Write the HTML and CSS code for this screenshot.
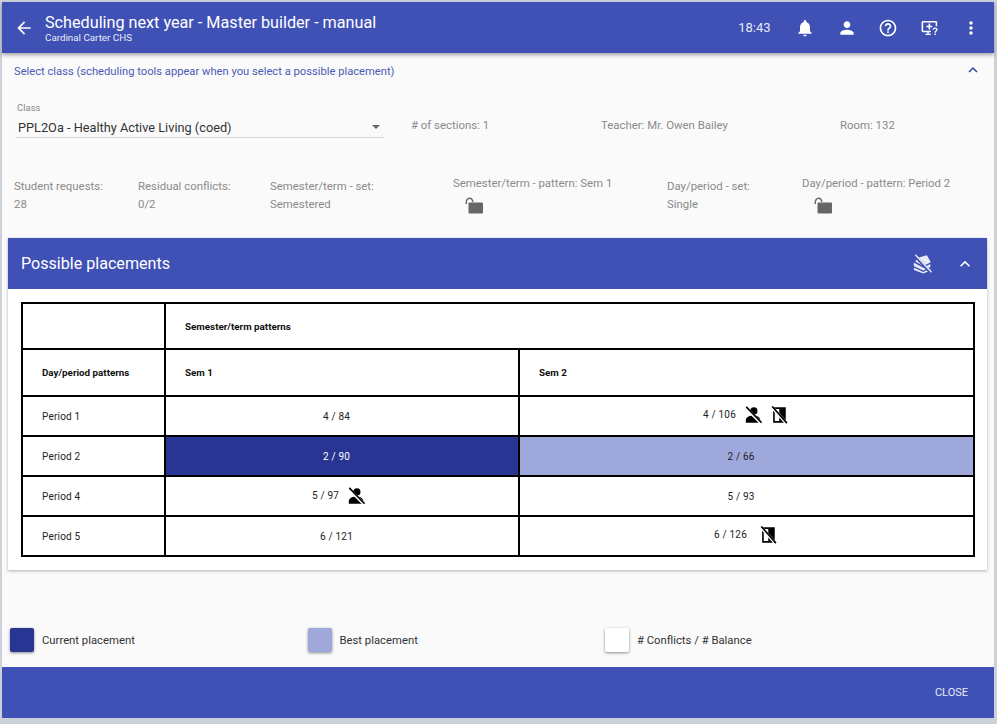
FILE: index.html
```html
<!DOCTYPE html>
<html lang="en">
<head>
<meta charset="utf-8">
<title>Master builder</title>
<link rel="stylesheet" href="styles.css">
</head>
<body>
<div class="dialog">
  <header class="appbar">
    <svg class="back" viewBox="0 0 24 24"><path d="M20 11H7.830l5.590-5.590L12 4l-8 8 8 8 1.410-1.410L7.830 13H20v-2z"/></svg>
    <div class="titles">
      <div class="title">Scheduling next year - Master builder - manual</div>
      <div class="subtitle">Cardinal Carter CHS</div>
    </div>
    <div class="time">18:43</div>
    <svg class="act" viewBox="0 0 24 24"><path d="M12 22c1.100 0 2-.9 2-2h-4c0 1.100.89 2 2 2zm6-6v-5c0-3.070-1.640-5.640-4.500-6.320V4c0-.83-.67-1.500-1.500-1.500s-1.500.67-1.500 1.500v.68C7.630 5.360 6 7.920 6 11v5l-2 2v1h16v-1l-2-2z"/></svg>
    <svg class="act" viewBox="0 0 24 24"><path d="M12 12c2.210 0 4-1.790 4-4s-1.790-4-4-4-4 1.790-4 4 1.790 4 4 4zm0 2c-2.670 0-8 1.340-8 4v2h16v-2c0-2.660-5.330-4-8-4z"/></svg>
    <svg class="act" viewBox="0 0 24 24"><path d="M11 18h2v-2h-2v2zm1-16C6.480 2 2 6.480 2 12s4.480 10 10 10 10-4.480 10-10S17.520 2 12 2zm0 18c-4.410 0-8-3.590-8-8s3.590-8 8-8 8 3.590 8 8-3.590 8-8 8zm0-14c-2.210 0-4 1.790-4 4h2c0-1.100.9-2 2-2s2 .9 2 2c0 2-3 1.750-3 5h2c0-2.250 3-2.500 3-5 0-2.210-1.790-4-4-4z"/></svg>
    <svg class="act" viewBox="0 0 24 24"><path d="M3.500 3.500h15.500c.9 0 1.600.7 1.600 1.600V10h-1.800V5.300H3.800v10h9.200V17H10.500v1.800h2.500v1.700H6.500v-1.700h2.300V17H3.500c-.9 0-1.600-.7-1.600-1.600V5.100c0-.9.7-1.600 1.600-1.600z"/><path d="M10.300 6.500h1.800v2.700h2.700V11h-2.700v2.700h-1.800V11H7.600V9.200h2.700z"/><path d="M18.200 11.500c-1.700 0-2.900 1.100-2.900 2.700h1.700c0-.7.5-1.200 1.200-1.200s1.200.5 1.200 1.100c0 1.200-2.100 1.300-2.100 3.500h1.700c0-1.500 2.100-1.800 2.100-3.600 0-1.500-1.200-2.500-2.900-2.500zM17.300 18.600h1.700v1.800h-1.700z"/></svg>
    <svg class="act" viewBox="0 0 24 24"><path d="M12 8c1.100 0 2-.9 2-2s-.9-2-2-2-2 .9-2 2 .9 2 2 2zm0 2c-1.100 0-2 .9-2 2s.9 2 2 2 2-.9 2-2-.9-2-2-2zm0 6c-1.100 0-2 .9-2 2s.9 2 2 2 2-.9 2-2-.9-2-2-2z"/></svg>
  </header>

  <main class="content">
    <div class="section-head">
      <span class="section-title">Select class (scheduling tools appear when you select a possible placement)</span>
      <svg class="chev-blue" viewBox="0 0 24 24"><path d="M7.410 15.410 12 10.830l4.590 4.580L18 14l-6-6-6 6z"/></svg>
    </div>

    <div class="class-row">
      <div class="select">
        <div class="select-label">Class</div>
        <div class="select-value">PPL2Oa - Healthy Active Living (coed)<span class="caret"></span></div>
      </div>
      <div class="info">
        <span># of sections: 1</span>
        <span>Teacher: Mr. Owen Bailey</span>
        <span>Room: 132</span>
      </div>
    </div>

    <div class="stats">
      <div class="stat"><div>Student requests:</div><div class="val">28</div></div>
      <div class="stat"><div>Residual conflicts:</div><div class="val">0/2</div></div>
      <div class="stat"><div>Semester/term - set:</div><div class="val">Semestered</div></div>
      <div class="stat lockstat"><div>Semester/term - pattern: Sem 1</div>
        <svg class="lock" viewBox="0 0 20 20"><path d="M1.500 7C1.500 3.600 3.200 1.500 5.500 1.500S9.500 3.400 9.500 6H8C8 4.200 7 3 5.500 3S3 4.500 3 7v1H1.500z"/><rect x="4.500" y="6.500" width="14.500" height="11" rx="1"/></svg>
      </div>
      <div class="stat"><div>Day/period - set:</div><div class="val">Single</div></div>
      <div class="stat lockstat"><div>Day/period - pattern: Period 2</div>
        <svg class="lock" viewBox="0 0 20 20"><path d="M1.500 7C1.500 3.600 3.200 1.500 5.500 1.500S9.500 3.400 9.500 6H8C8 4.200 7 3 5.500 3S3 4.500 3 7v1H1.500z"/><rect x="4.500" y="6.500" width="14.500" height="11" rx="1"/></svg>
      </div>
    </div>

    <section class="card">
      <div class="card-head">
        <span class="card-title">Possible placements</span>
        <svg class="card-icon" viewBox="0 0 24 24"><path d="M7 4.500 18 1.500 22.500 10 13.500 14.500 4 9z"/><path d="M2.500 10.500 13.500 16.500 22 12v3.500l-8.500 4.200L3 15c-1-.5-1.400-3.400-.5-4.500z"/><path d="M2.500 16.500 13.500 21.500 22 17.500v2.500l-8.500 3.500L3 19.500c-.9-.5-.9-2.300-.5-3z"/><path d="M3 1.500 23 23" stroke="#3f51b5" stroke-width="3.600"/><path d="M4 1 23.500 22" stroke="#e8eaf6" stroke-width="1.700"/></svg>
        <svg class="card-chev" viewBox="0 0 24 24"><path d="M7.410 15.410 12 10.830l4.590 4.580L18 14l-6-6-6 6z"/></svg>
      </div>
      <div class="card-body">
        <table class="grid">
          <colgroup><col class="c1"><col class="c2"><col class="c3"></colgroup>
          <tr class="tall"><th></th><th colspan="2">Semester/term patterns</th></tr>
          <tr class="tall"><th>Day/period patterns</th><th>Sem 1</th><th>Sem 2</th></tr>
          <tr><td class="lab">Period 1</td><td>4 / 84</td><td class="iconcell"><span class="cell"><span>4 / 106</span>
            <svg class="flag flag1" viewBox="0 0 20 20"><use href="#person-off"/></svg>
            <svg class="flag flag2" viewBox="0 0 20 20"><use href="#phone-off"/></svg></span></td></tr>
          <tr><td class="lab">Period 2</td><td class="current">2 / 90</td><td class="best">2 / 66</td></tr>
          <tr><td class="lab">Period 4</td><td class="iconcell narrow"><span class="cell"><span>5 / 97</span>
            <svg class="flag flag1" viewBox="0 0 20 20"><use href="#person-off"/></svg></span></td><td>5 / 93</td></tr>
          <tr><td class="lab">Period 5</td><td>6 / 121</td><td class="iconcell"><span class="cell"><span>6 / 126</span>
            <svg class="flag flag3" viewBox="0 0 20 20"><use href="#phone-off"/></svg></span></td></tr>
        </table>
      </div>
    </section>

    <div class="legend">
      <div class="leg"><span class="swatch s-current"></span>Current placement</div>
      <div class="leg"><span class="swatch s-best"></span>Best placement</div>
      <div class="leg"><span class="swatch s-plain"></span># Conflicts / # Balance</div>
    </div>
  </main>

  <footer class="foot"><span class="close">CLOSE</span></footer>
</div>

<svg class="defs" width="0" height="0">
  <symbol id="person-off" viewBox="0 0 20 20">
    <circle cx="11" cy="5.500" r="4"/>
    <path d="M2 18.500v-3C2 12 7 10.500 10.500 10.500s7.500 1.500 7.500 5v3z"/>
    <path d="M1.500 1.500 18.500 18.500" stroke="#fff" stroke-width="3.600"/>
    <path d="M2.500 1 19.500 18.500" stroke="#000" stroke-width="1.800"/>
  </symbol>
  <symbol id="phone-off" viewBox="0 0 20 20">
    <path d="M3.500 1.500h14v17h-14zM5.300 3.300v13.400h5V3.300z" fill-rule="evenodd"/>
    <path d="M1.500 .5 18 19" stroke="#fff" stroke-width="3.400"/>
    <path d="M2.500 .5 18.800 19" stroke="#000" stroke-width="1.800"/>
  </symbol>
</svg>
</body>
</html>
```
FILE: styles.css
```css
* { box-sizing: border-box; }
html, body { margin: 0; padding: 0; height: 100%; }
body {
  background: #cdd1da;
  font-family: Roboto, "Liberation Sans", sans-serif;
  overflow: hidden;
}
.dialog {
  width: 992px;
  height: 716px;
  margin: 2px 3px 6px 2px;
  background: #fafafa;
  display: flex;
  flex-direction: column;
}
.appbar {
  flex: none;
  height: 51px;
  background: #3f51b5;
  color: #fff;
  display: flex;
  align-items: center;
  box-shadow: 0 2px 4px rgba(0,0,0,.35);
  position: relative;
  z-index: 1;
  fill: #fff;
}
.back { width: 20px; height: 20px; margin-left: 12px; }
.titles { margin-left: 11px; flex: 1; }
.title { font-size: 16.200px; line-height: 19px; }
.subtitle { font-size: 9.800px; line-height: 11px; color: #e8eaf6; }
.time { font-size: 13px; margin-right: 3px; color: #e8eaf6; }
.act { width: 20px; height: 20px; margin-left: 21.500px; }
.act:last-child { margin-right: 13px; }

.content { flex: 1; display: flex; flex-direction: column; min-height: 0; }
.section-head {
  height: 37px;
  padding: 0 14px 0 12px;
  display: flex;
  align-items: center;
  justify-content: space-between;
}
.section-title { font-size: 11.200px; color: #4a5ab5; }
.chev-blue { width: 18px; height: 18px; fill: #303f9f; margin-right: -2px; margin-top: -3px; }

.class-row { display: flex; height: 57px; margin-top: 12px; }
.select { width: 368px; margin-left: 14px; border-bottom: 1px solid #d5d5d5; height: 36px; }
.select-label { font-size: 9.500px; color: #8a8a8a; line-height: 12px; padding-left: 1px; }
.select-value {
  font-size: 12.750px;
  color: #333;
  line-height: 16px;
  margin-top: 6px;
  padding-left: 2px;
  position: relative;
}
.caret {
  position: absolute;
  right: 4px;
  top: 5px;
  border: 4.500px solid transparent;
  border-top-color: #666;
  border-bottom: 0;
}
.info {
  display: grid;
  grid-template-columns: 190px 239px auto;
  margin-left: 27px;
  font-size: 11.400px;
  color: #8a8a8a;
  padding-top: 16px;
  line-height: 14px;
}

.stats {
  display: grid;
  grid-template-columns: 124px 132px 183px 214px 135px auto;
  padding-left: 12px;
  height: 65px;
  margin-top: 14px;
  font-size: 11.400px;
  color: #8a8a8a;
  line-height: 14px;
}
.stat { padding-top: 6px; }
.val { margin-top: 4px; }
.lockstat { padding-top: 3px; }
.lock { display: block; width: 20px; height: 20px; margin: 6px 0 0 11px; fill: #666; }

.card {
  margin: 0 7px 0 6px;
  height: 332px;
  background: #fff;
  box-shadow: 0 1px 3px rgba(0,0,0,.3);
  flex: none;
}
.card-head {
  height: 51px;
  background: #3f51b5;
  display: flex;
  align-items: center;
  padding: 0 13px;
  color: #fff;
}
.card-title { flex: 1; font-size: 16.100px; }
.card-icon { width: 20px; height: 20px; fill: #e8eaf6; margin-right: 23px; }
.card-chev { width: 20px; height: 20px; fill: #fff; margin-right: -1px; }
.card-body { padding: 13px 13px 0; }
.grid {
  width: 952px;
  border-collapse: collapse;
  table-layout: fixed;
  font-size: 10px;
  color: #222;
}
.c1 { width: 143px; }
.c2 { width: 354px; }
.c3 { width: 455px; }
.grid th, .grid td { border: 2px solid #000; padding: 0; height: 40px; }
.grid .tall th { height: 47px; text-align: left; padding-left: 19px; font-weight: 700; font-size: 9.800px; color: #111; }
.grid .tall:first-child th { height: 46px; }
.grid td { text-align: center; letter-spacing: .2px; padding-right: 11px; }
.grid td.lab { text-align: left; padding: 0 0 0 19px; }
.grid td.iconcell { padding: 0 2px 3px 0; }
.grid td.iconcell.narrow { padding: 0 7px 1px 0; }
.cell { display: inline-flex; align-items: center; }
.current { background: #283593; color: #fff; }
.best { background: #9fa8da; }
.flag { width: 18px; height: 18px; fill: #000; display: block; }
.flag1 { margin-left: 8px; }
.flag2 { margin-left: 8px; }
.flag3 { margin-left: 12px; }

.legend { display: grid; grid-template-columns: 297.500px 297.500px auto; padding-left: 8px; margin-top: 58px; }
.leg { display: flex; align-items: center; font-size: 11.300px; color: #333; height: 24px; }
.swatch {
  width: 24px;
  height: 24px;
  border-radius: 2px;
  margin-right: 8px;
  box-shadow: 0 1px 3px rgba(0,0,0,.45);
}
.s-current { background: #283593; }
.s-best { background: #9fa8da; }
.s-plain { background: #fff; }

.foot {
  flex: none;
  height: 51px;
  background: #3f51b5;
  display: flex;
  align-items: center;
  justify-content: flex-end;
  padding-right: 26px;
}
.close { font-size: 11px; color: #e8eaf6; }
.defs { position: absolute; }
```
